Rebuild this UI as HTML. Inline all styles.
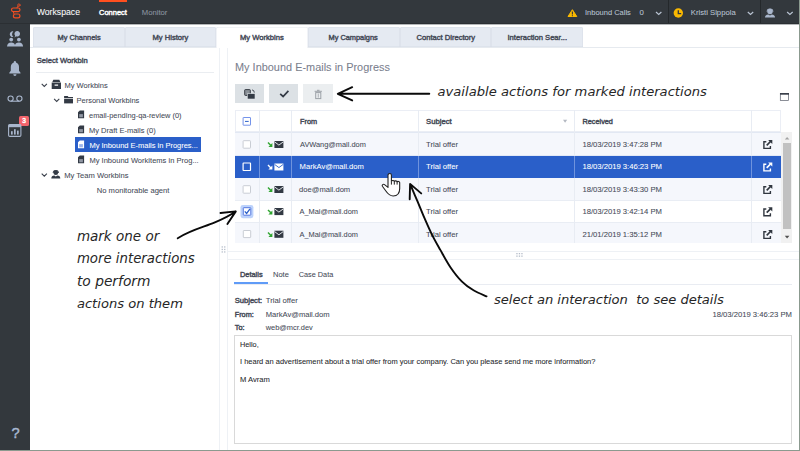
<!DOCTYPE html>
<html><head><meta charset="utf-8">
<style>
html,body{margin:0;padding:0;}
body{width:800px;height:451px;overflow:hidden;background:#fff;position:relative;font-family:"Liberation Sans",sans-serif;font-size:7.4px;color:#454a57;}
.a{position:absolute;white-space:nowrap;line-height:1;}
.b{-webkit-text-stroke:.42px currentColor;}
.r{-webkit-text-stroke:.06px currentColor;}
.hand{font-family:"DejaVu Sans",sans-serif;font-style:italic;color:#262626;}
.tab{top:27px;height:19.5px;width:91.67px;background:#e5eaf2;border-radius:2px 2px 0 0;box-shadow:inset 0 0 0 .5px #d6dce6;}
.row{left:234.8px;width:546.2px;}
.vl{width:1px;background:#e8ecf3;}
svg{position:absolute;left:0;top:0;overflow:visible}
</style></head><body>
<!-- chrome -->
<div class="a" style="left:0;top:0;width:800px;height:24px;background:#33383d"></div>
<div class="a" style="left:0;top:22.6px;width:800px;height:1.4px;background:#2b2f33"></div>
<div class="a" style="left:30px;top:24px;width:770px;height:1px;background:#b4b7b9"></div>
<div class="a" style="left:0;top:24px;width:30px;height:427px;background:#33383d"></div>
<div class="a" style="left:99px;top:0;width:27.8px;height:1.8px;background:#ff4f1f"></div>
<div class="a" style="left:668px;top:0;width:1px;height:23px;background:#24282b"></div>
<div class="a" style="left:760px;top:0;width:1px;height:23px;background:#24282b"></div>

<!-- tabs -->
<div class="a" style="left:30px;top:46.5px;width:770px;height:1px;background:#e6eaef"></div>
<div class="a tab" style="left:33px"></div>
<div class="a tab" style="left:124.67px"></div>
<div class="a tab" style="left:216.33px;background:#fff;height:20.5px;box-shadow:inset .5px .5px 0 0 #e3e7ee, inset -.5px 0 0 0 #e3e7ee"></div>
<div class="a tab" style="left:308px"></div>
<div class="a tab" style="left:399.67px"></div>
<div class="a tab" style="left:491.33px"></div>

<!-- left panel -->
<div class="a" style="left:36px;top:72px;width:178px;height:1px;background:#eaedf1"></div>
<div class="a" style="left:219.3px;top:47.5px;width:1px;height:403px;background:#eef1f5"></div>
<div class="a" style="left:227.3px;top:47.5px;width:1px;height:403px;background:#eef1f5"></div>
<div class="a" style="left:75.4px;top:137.4px;width:126.1px;height:14.5px;background:#2a5fc9"></div>

<!-- action buttons -->
<div class="a" style="left:234.8px;top:83.8px;width:29.3px;height:19.4px;background:#dce1e5"></div>
<div class="a" style="left:268.9px;top:83.8px;width:29.5px;height:19.4px;background:#dce1e5"></div>
<div class="a" style="left:303.2px;top:83.8px;width:29.7px;height:19.4px;background:#ebeef0"></div>

<!-- table -->
<div class="a row" style="top:110px;height:22.3px;background:#fff;box-shadow:inset 0 0 0 1px #ebeef5"></div>
<div class="a row" style="top:132px;height:1px;background:#e2e8f3"></div>
<div class="a row" style="top:133px;height:23px;background:#f5f7fc"></div>
<div class="a row" style="top:156px;height:22px;background:#2a5fc9"></div>
<div class="a row" style="top:155px;height:1px;background:#e3e9f6"></div>
<div class="a row" style="top:178px;height:22px;background:#f5f7fc"></div>
<div class="a row" style="top:200px;height:22.4px;background:#fff"></div>
<div class="a row" style="top:222.4px;height:20.2px;background:#f5f7fc"></div>
<div class="a row" style="top:199.6px;height:.8px;background:#e9edf4"></div>
<div class="a row" style="top:222px;height:.8px;background:#e9edf4"></div>
<!-- column lines -->
<div class="a vl" style="left:258.6px;top:110px;height:132.6px"></div>
<div class="a vl" style="left:291.2px;top:110px;height:132.6px"></div>
<div class="a vl" style="left:418px;top:110px;height:132.6px"></div>
<div class="a vl" style="left:573.6px;top:110px;height:132.6px"></div>
<div class="a vl" style="left:750.8px;top:110px;height:132.6px"></div>
<div class="a" style="left:258.6px;top:156px;width:1px;height:22px;background:#6f93dd"></div>
<div class="a" style="left:291.2px;top:156px;width:1px;height:22px;background:#6f93dd"></div>
<div class="a" style="left:418px;top:156px;width:1px;height:22px;background:#6f93dd"></div>
<div class="a" style="left:573.6px;top:156px;width:1px;height:22px;background:#6f93dd"></div>
<div class="a" style="left:750.8px;top:156px;width:1px;height:22px;background:#6f93dd"></div>
<!-- scrollbar -->
<div class="a" style="left:781px;top:132.4px;width:11.3px;height:110.2px;background:#f1f1f1"></div>
<div class="a" style="left:783px;top:143px;width:8px;height:86px;background:#c1c1c1"></div>

<!-- splitter + details -->
<div class="a" style="left:227.3px;top:250.8px;width:572px;height:1px;background:#eef1f5"></div>
<div class="a" style="left:227.3px;top:259.4px;width:572px;height:1px;background:#eef1f5"></div>
<div class="a" style="left:234px;top:284px;width:558px;height:1px;background:#e9ecf2"></div>
<div class="a" style="left:234px;top:282px;width:34px;height:2px;background:#5f9bf7"></div>
<div class="a" style="left:234px;top:335px;width:558px;height:109px;box-sizing:border-box;border:1px solid #d9d9d9;background:#fff"></div>

<div class="a" style="left:19.4px;top:116px;width:9.3px;height:9.8px;border-radius:1.6px;background:#f2646c"></div>
<div class="a r" style="left:36.75px;top:7.97px;font-size:8.7px;color:#fbfbfc;">Workspace</div>
<div class="a b" style="left:99.00px;top:8.97px;font-size:7.5px;color:#ffffff;">Connect</div>
<div class="a r" style="left:141.75px;top:8.97px;font-size:7.7px;color:#8c96a1;">Monitor</div>
<div class="a r" style="left:585.00px;top:8.97px;font-size:7.5px;color:#b9c3d2;">Inbound Calls</div>
<div class="a r" style="left:639.40px;top:8.97px;font-size:7.8px;color:#b9c3d2;">0</div>
<div class="a r" style="left:690.80px;top:8.97px;font-size:7.7px;color:#b9c3d2;">Kristi Sippola</div>
<div class="a b" style="left:57.50px;top:33.98px;font-size:7.4px;color:#454a57;">My Channels</div>
<div class="a b" style="left:152.50px;top:33.98px;font-size:7.6px;color:#454a57;">My History</div>
<div class="a b" style="left:240.00px;top:33.98px;font-size:7.6px;color:#454a57;">My Workbins</div>
<div class="a b" style="left:328.50px;top:33.98px;font-size:7.4px;color:#454a57;">My Campaigns</div>
<div class="a b" style="left:416.50px;top:33.98px;font-size:7.6px;color:#454a57;">Contact Directory</div>
<div class="a b" style="left:507.50px;top:33.98px;font-size:7.6px;color:#454a57;">Interaction Sear...</div>
<div class="a b" style="left:36.75px;top:56.98px;font-size:7.6px;color:#454a57;">Select Workbin</div>
<div class="a r" style="left:64.50px;top:81.97px;font-size:7.5px;color:#454a57;">My Workbins</div>
<div class="a r" style="left:76.50px;top:96.97px;font-size:7.5px;color:#454a57;">Personal Workbins</div>
<div class="a r" style="left:89.00px;top:111.97px;font-size:7.4px;color:#454a57;letter-spacing:0.019px;">email-pending-qa-review (0)</div>
<div class="a r" style="left:89.00px;top:126.97px;font-size:7.5px;color:#454a57;">My Draft E-mails (0)</div>
<div class="a r" style="left:89.40px;top:141.97px;font-size:7.5px;color:#ffffff;letter-spacing:-0.012px;">My Inbound E-mails in Progres...</div>
<div class="a r" style="left:89.40px;top:156.97px;font-size:7.5px;color:#454a57;letter-spacing:0.022px;">My Inbound Workitems in Prog...</div>
<div class="a r" style="left:64.20px;top:171.97px;font-size:7.6px;color:#454a57;">My Team Workbins</div>
<div class="a r" style="left:96.80px;top:186.97px;font-size:7.6px;color:#454a57;">No monitorable agent</div>
<div class="a r" style="left:235.00px;top:61.98px;font-size:10.9px;color:#7a7e8d;letter-spacing:0.019px;">My Inbound E-mails in Progress</div>
<div class="a b" style="left:300.00px;top:117.97px;font-size:7.3px;color:#454a57;">From</div>
<div class="a b" style="left:426.00px;top:117.97px;font-size:7.7px;color:#454a57;">Subject</div>
<div class="a b" style="left:582.50px;top:117.97px;font-size:7.3px;color:#454a57;">Received</div>
<div class="a r" style="left:300.00px;top:140.97px;font-size:7.4px;color:#454a57;">AVWang@mail.dom</div>
<div class="a r" style="left:426.00px;top:140.97px;font-size:7.7px;color:#454a57;">Trial offer</div>
<div class="a r" style="left:582.50px;top:140.97px;font-size:7.7px;color:#454a57;letter-spacing:-0.023px;">18/03/2019 3:47:28 PM</div>
<div class="a r" style="left:299.60px;top:162.97px;font-size:7.6px;color:#ffffff;">MarkAv@mail.dom</div>
<div class="a r" style="left:426.00px;top:162.97px;font-size:7.7px;color:#ffffff;">Trial offer</div>
<div class="a r" style="left:582.50px;top:162.97px;font-size:7.7px;color:#ffffff;letter-spacing:-0.023px;">18/03/2019 3:46:23 PM</div>
<div class="a r" style="left:299.00px;top:185.97px;font-size:7.6px;color:#454a57;">doe@mail.dom</div>
<div class="a r" style="left:426.00px;top:185.97px;font-size:7.7px;color:#454a57;">Trial offer</div>
<div class="a r" style="left:582.50px;top:185.97px;font-size:7.7px;color:#454a57;letter-spacing:-0.023px;">18/03/2019 3:43:30 PM</div>
<div class="a r" style="left:299.50px;top:207.97px;font-size:7.4px;color:#454a57;">A_Mai@mail.dom</div>
<div class="a r" style="left:426.00px;top:207.97px;font-size:7.7px;color:#454a57;">Trial offer</div>
<div class="a r" style="left:582.50px;top:207.97px;font-size:7.7px;color:#454a57;letter-spacing:-0.023px;">18/03/2019 3:42:14 PM</div>
<div class="a r" style="left:299.50px;top:230.97px;font-size:7.4px;color:#454a57;">A_Mai@mail.dom</div>
<div class="a r" style="left:426.00px;top:230.97px;font-size:7.7px;color:#454a57;">Trial offer</div>
<div class="a r" style="left:582.50px;top:230.97px;font-size:7.7px;color:#454a57;letter-spacing:-0.023px;">21/01/2019 1:35:12 PM</div>
<div class="a b" style="left:240.00px;top:270.98px;font-size:7.4px;color:#454a57;">Details</div>
<div class="a r" style="left:273.00px;top:270.98px;font-size:7.5px;color:#454a57;">Note</div>
<div class="a r" style="left:298.75px;top:270.98px;font-size:7.3px;color:#454a57;">Case Data</div>
<div class="a b" style="left:234.70px;top:296.98px;font-size:7.6px;color:#454a57;">Subject:</div>
<div class="a b" style="left:234.70px;top:310.98px;font-size:7.3px;color:#454a57;">From:</div>
<div class="a b" style="left:234.70px;top:323.98px;font-size:7.4px;color:#454a57;">To:</div>
<div class="a r" style="left:265.75px;top:296.98px;font-size:7.7px;color:#454a57;">Trial offer</div>
<div class="a r" style="left:265.75px;top:310.98px;font-size:7.6px;color:#454a57;letter-spacing:-0.024px;">MarkAv@mail.dom</div>
<div class="a r" style="left:265.75px;top:323.98px;font-size:7.4px;color:#454a57;">web@mcr.dev</div>
<div class="a r" style="left:712.50px;top:310.98px;font-size:7.7px;color:#454a57;letter-spacing:-0.023px;">18/03/2019 3:46:23 PM</div>
<div class="a r" style="left:240.00px;top:340.98px;font-size:7.3px;color:#26282c;">Hello,</div>
<div class="a r" style="left:240.00px;top:357.98px;font-size:7.5px;color:#26282c;letter-spacing:-0.011px;">I heard an advertisement about a trial offer from your company. Can you please send me more information?</div>
<div class="a r" style="left:240.00px;top:375.98px;font-size:7.6px;color:#26282c;">M Avram</div>
<div class="a b" style="left:22.30px;top:117.97px;font-size:6.6px;color:#ffffff;">3</div>
<div class="a b" style="left:11.40px;top:425.98px;font-size:14.7px;color:#a9b9d3;letter-spacing:-0.580px;">?</div>
<div class="a hand" style="left:437.50px;top:84.97px;font-size:13.1px;letter-spacing:0.018px;">available actions for marked interactions</div>
<div class="a hand" style="left:76.90px;top:229.97px;font-size:13.5px;">mark one or</div>
<div class="a hand" style="left:76.90px;top:251.97px;font-size:13.3px;">more interactions</div>
<div class="a hand" style="left:76.90px;top:274.98px;font-size:13.8px;">to perform</div>
<div class="a hand" style="left:76.90px;top:296.98px;font-size:13.1px;">actions on them</div>
<div class="a hand" style="left:494.00px;top:292.98px;font-size:13.1px;letter-spacing:-0.023px;">select an interaction&nbsp; to see details</div>

<svg width="800" height="451" viewBox="0 0 800 451">
<!-- genesys logo -->
<g fill="none" stroke="#f04e23" stroke-width="1.2" stroke-linecap="round">
<rect x="11.500" y="8" width="8.500" height="3.600" rx="1.800"/>
<rect x="13.400" y="14" width="6.500" height="3.800" rx="1.900"/>
<circle cx="18.900" cy="5.100" r="1.200" stroke-width=".85"/>
<path d="M18 6.200 L17 7.800" stroke-width="1"/>
<path d="M13.600 11.700 Q12.600 13 14.300 14.200" stroke-width="1"/>
</g>
<!-- sidebar icons -->
<g fill="#a9b6cc">
<circle cx="11.2" cy="39.6" r="1.9"/><circle cx="18.9" cy="39.6" r="1.9"/>
<path d="M7 46.5 Q7.4 42.4 11.2 42.4 Q14.6 42.4 15 45.2 Q15.4 42.4 18.9 42.4 Q22.7 42.4 23.1 46.5 Z"/>
<path d="M13.4 31.4 A2.9 2.9 0 1 0 13.4 37 A3.6 3.6 0 0 1 13.4 31.4 Z"/>
<path d="M17 31 A2.8 2.8 0 1 1 16 36.3 L14.6 37.6 L15.1 35.6 A2.8 2.8 0 0 1 17 31 Z"/>
<!-- bell -->
<path d="M14.9 61 a1.1 1.1 0 0 1 1.1 1.1 v.5 c2 .6 3 2.300 3 4.500 v3.600 l1.500 2 v.800 h-11.200 v-.800 l1.500 -2 v-3.600 c0 -2.200 1 -3.900 3 -4.500 v-.5 a1.100 1.100 0 0 1 1.100 -1.100 z"/>
<path d="M13.300 74.300 h3.200 a1.600 1.600 0 0 1 -3.200 0 z"/>
</g>
<g fill="none" stroke="#a9b6cc" stroke-width="1.1">
<circle cx="10.6" cy="98.6" r="2.6"/><circle cx="19.4" cy="98.6" r="2.6"/><path d="M10.6 101.2 H19.4"/>
<rect x="8.6" y="124.6" width="12.3" height="11.8" rx="1.2"/>
</g>
<g fill="#a9b6cc">
<rect x="8.6" y="124.6" width="12.3" height="2.6"/>
<rect x="11" y="131.2" width="1.7" height="3.4"/><rect x="14" y="129.200" width="1.7" height="5.400"/><rect x="17" y="130.600" width="1.7" height="4"/>
</g>

<!-- top-right icons -->
<path d="M572.4 9.7 L576.8 16.500 H568 Z" fill="#fbb900" stroke="#fbb900" stroke-width="1" stroke-linejoin="round"/>
<path d="M572.4 11.6 V14.400 M572.4 15.300 V16.200" stroke="#33383d" stroke-width="1.100" fill="none"/>
<g fill="none" stroke="#b9c3d2" stroke-width="1.2">
<path d="M656 12 L658.7 14.500 L661.4 12"/>
<path d="M747.8 12 L750.5 14.500 L753.2 12"/>
<path d="M787.100 12 L789.900 14.500 L792.700 12"/>
</g>
<circle cx="678.3" cy="13" r="4.700" fill="#fbb900"/>
<path d="M678.300 10.300 V13.600 H681.200" stroke="#33383d" stroke-width="1.3" fill="none"/>
<g fill="#a9b6cc">
<circle cx="770" cy="11.500" r="2.700"/>
<path d="M765 17.500 Q765 14.600 768.300 14.400 L770 15.600 L771.700 14.400 Q775 14.600 775 17.500 Z"/>
<path d="M766.600 11.800 A3.400 3.400 0 0 1 773.400 11.800 L772.600 11.800 A2.600 2.600 0 0 0 767.400 11.800 Z" />
</g>

<!-- tree chevrons + icons -->
<g fill="none" stroke="#3b414c" stroke-width="1.1">
<path d="M41.700 83.900 L44.300 86.400 L46.900 83.900"/>
<path d="M54.100 98.900 L56.700 101.400 L59.300 98.900"/>
<path d="M41.700 173.700 L44.300 176.200 L46.900 173.700"/>
</g>
<g fill="#333a45">
<path d="M53.300 79.700 h6 l1 2.400 h-8 z"/>
<path d="M51.700 82.500 h9.300 v6.500 h-9.300 z M54.600 84.600 v1.100 h3.500 v-1.100 z" fill-rule="evenodd"/>
<path d="M64.100 96 h3.600 l.8 1.100 h4.500 v1 h-8.900 z"/>
<path d="M64.100 98.700 h8.900 v4.700 h-8.900 z"/>
<!-- docs -->
<path d="M79.800 110.4 h4.300 v7.900 h-6.100 v-6.100 z"/><rect x="79.200" y="114.1" width="3.700" height="3.200" fill="#9096a2"/>
<path d="M79.800 125.4 h4.300 v7.900 h-6.100 v-6.100 z"/><rect x="79.200" y="129.1" width="3.700" height="3.200" fill="#9096a2"/>
<path d="M79.800 155.4 h4.300 v7.900 h-6.100 v-6.100 z"/><rect x="79.200" y="159.1" width="3.700" height="3.200" fill="#9096a2"/>
<!-- team -->
<circle cx="55.800" cy="172.700" r="2.400"/>
<path d="M51.300 178.400 Q51.300 175.600 54.300 175.400 L55.800 176.500 L57.300 175.400 Q60.300 175.600 60.300 178.400 Z"/>
<path d="M52.700 173 A3.100 3.100 0 0 1 58.900 173 L58.100 173 A2.300 2.300 0 0 0 53.500 173 Z"/>
</g>
<path d="M79.800 140.4 h4.300 v7.900 h-6.100 v-6.100 z" fill="#ffffff"/><rect x="79.200" y="144.1" width="3.700" height="3.200" fill="#9db5ea"/>

<!-- button icons -->
<g>
<rect x="244.700" y="89.600" width="5.600" height="5.800" rx=".6" fill="#8b9198" stroke="#3a3f47" stroke-width="1"/>
<rect x="247.300" y="93.700" width="7.700" height="5.300" fill="#333a45" stroke="#dce1e5" stroke-width=".6"/>
<path d="M252 89.900 Q254.300 90 254.300 92.600" fill="none" stroke="#4a505a" stroke-width="1"/>
<path d="M280.200 93.900 L283.100 96.500 L288.400 90.800" fill="none" stroke="#333a45" stroke-width="1.7"/>
<g fill="none" stroke="#9ca1a7" stroke-width="1">
<path d="M314.600 91.300 H321.900 M317 90.300 H319.500"/>
<rect x="315.700" y="92.600" width="5.100" height="6" />
<path d="M318.250 93.600 V97.600" stroke-width=".8"/>
</g>
</g>

<!-- maximize -->
<rect x="780.300" y="93.500" width="8.300" height="7" fill="#fff" stroke="#5a5f6c" stroke-width=".7"/>
<rect x="780" y="93" width="9" height="1.700" fill="#3a3f4a"/>

<!-- header checkbox -->
<rect x="243.100" y="117.500" width="7.400" height="7.700" rx=".3" fill="#fff" stroke="#7493ea" stroke-width="1"/>
<path d="M245 121.400 H248.700" stroke="#2a5fc9" stroke-width="1"/>
<path d="M563 119.800 h4.200 l-2.100 3 z" fill="#b4b9c2"/>

<!-- row checkboxes -->
<g fill="#fff" stroke="#c9cdd4" stroke-width="1">
<rect x="243.100" y="140.700" width="7.400" height="7.500" rx=".6"/>
<rect x="243.100" y="185.700" width="7.400" height="7.500" rx=".6"/>
<rect x="243.300" y="230.500" width="7.400" height="7.100" rx=".6"/>
</g>
<rect x="243.100" y="163" width="7.400" height="7.500" rx=".4" fill="#2a5fc9" stroke="#ffffff" stroke-width="1.200"/>
<rect x="240.500" y="204.900" width="12.900" height="13.300" rx="2.400" fill="#bcd2fb"/>
<rect x="243.300" y="207.700" width="7.500" height="7.500" rx=".5" fill="#fff" stroke="#5578e0" stroke-width="1"/>
<path d="M244.800 211.400 L246.600 213.400 L250 208.900" fill="none" stroke="#2a5fc9" stroke-width="1.300"/>

<!-- row icons: arrow + envelope -->
<g id="ri1">
<path d="M268 142.5 L270.900 145.4" fill="none" stroke="#2fa52f" stroke-width="1.400"/><path d="M272.400 143.0 V147.1 H268.400 Z" fill="#2fa52f"/>
<path d="M274.400 141 h9 v7 h-9 z" fill="#323943"/>
<path d="M274.600 141.900 L278.900 145.100 L283.200 141.900" fill="none" stroke="#f5f7fc" stroke-width=".9"/>
</g>
<g>
<path d="M268 165.0 L270.900 167.9" fill="none" stroke="#ffffff" stroke-width="1.400"/><path d="M272.400 165.5 V169.6 H268.400 Z" fill="#ffffff"/>
<path d="M274.400 163.500 h9 v7 h-9 z" fill="#ffffff"/>
<path d="M274.600 164.400 L278.900 167.600 L283.200 164.400" fill="none" stroke="#2a5fc9" stroke-width=".9"/>
</g>
<g>
<path d="M268 187.5 L270.900 190.4" fill="none" stroke="#2fa52f" stroke-width="1.400"/><path d="M272.400 188.0 V192.1 H268.400 Z" fill="#2fa52f"/>
<path d="M274.400 186 h9 v7 h-9 z" fill="#323943"/>
<path d="M274.600 186.900 L278.900 190.100 L283.200 186.900" fill="none" stroke="#f5f7fc" stroke-width=".9"/>
</g>
<g>
<path d="M268 209.9 L270.900 212.8" fill="none" stroke="#2fa52f" stroke-width="1.400"/><path d="M272.400 210.4 V214.5 H268.400 Z" fill="#2fa52f"/>
<path d="M274.400 208 h9 v7.100 h-9 z" fill="#323943"/>
<path d="M274.600 208.900 L278.900 212.100 L283.200 208.900" fill="none" stroke="#ffffff" stroke-width=".9"/>
</g>
<g>
<path d="M268 232.5 L270.900 235.4" fill="none" stroke="#2fa52f" stroke-width="1.400"/><path d="M272.400 233.0 V237.1 H268.400 Z" fill="#2fa52f"/>
<path d="M274.400 230.700 h9 v7.100 h-9 z" fill="#323943"/>
<path d="M274.600 231.600 L278.900 234.800 L283.200 231.600" fill="none" stroke="#f5f7fc" stroke-width=".9"/>
</g>

<!-- popout icons -->
<path d="M766.300 141.7 H763.900 V148.4 H770.400 V146.0" fill="none" stroke="#30363f" stroke-width="1.400"/><path d="M766.700 145.3 L770.500 141.5" fill="none" stroke="#30363f" stroke-width="1.700"/><path d="M768.100 139.9 H772.300 V144.1 Z" fill="#30363f"/>
<path d="M766.300 164.2 H763.900 V170.9 H770.400 V168.5" fill="none" stroke="#ffffff" stroke-width="1.400"/><path d="M766.700 167.8 L770.500 164.0" fill="none" stroke="#ffffff" stroke-width="1.700"/><path d="M768.100 162.4 H772.300 V166.6 Z" fill="#ffffff"/>
<path d="M766.300 186.7 H763.900 V193.4 H770.400 V191.0" fill="none" stroke="#30363f" stroke-width="1.400"/><path d="M766.700 190.3 L770.500 186.5" fill="none" stroke="#30363f" stroke-width="1.700"/><path d="M768.100 184.9 H772.300 V189.1 Z" fill="#30363f"/>
<path d="M766.300 209.0 H763.900 V215.7 H770.400 V213.3" fill="none" stroke="#30363f" stroke-width="1.400"/><path d="M766.700 212.6 L770.500 208.8" fill="none" stroke="#30363f" stroke-width="1.700"/><path d="M768.100 207.2 H772.300 V211.4 Z" fill="#30363f"/>
<path d="M766.300 231.7 H763.900 V238.4 H770.400 V236.0" fill="none" stroke="#30363f" stroke-width="1.400"/><path d="M766.700 235.3 L770.500 231.5" fill="none" stroke="#30363f" stroke-width="1.700"/><path d="M768.100 229.9 H772.300 V234.1 Z" fill="#30363f"/>

<!-- scrollbar arrows -->
<path d="M784.800 139.500 L787.100 136.900 L789.400 139.500 Z" fill="#a3a3a3"/>
<path d="M784.800 235.800 L787.100 238.400 L789.400 235.800 Z" fill="#505050"/>

<!-- splitter grips -->
<g fill="#b5bdc9">
<rect x="516.300" y="253" width="1.300" height="1.300"/><rect x="518.800" y="253" width="1.300" height="1.300"/><rect x="521.300" y="253" width="1.300" height="1.300"/>
<rect x="516.300" y="255.500" width="1.300" height="1.300"/><rect x="518.800" y="255.500" width="1.300" height="1.300"/><rect x="521.300" y="255.500" width="1.300" height="1.300"/>
<rect x="221.600" y="246.300" width="1.300" height="1.300"/><rect x="224.100" y="246.300" width="1.300" height="1.300"/>
<rect x="221.600" y="248.800" width="1.300" height="1.300"/><rect x="224.100" y="248.800" width="1.300" height="1.300"/>
<rect x="221.600" y="251.300" width="1.300" height="1.300"/><rect x="224.100" y="251.300" width="1.300" height="1.300"/>
</g>

<!-- annotation arrows -->
<g fill="none" stroke="#0a0a0a" stroke-width="1.9" stroke-linecap="round" stroke-linejoin="round">
<path d="M429.300 93.800 H338 M352.200 87.200 L337.800 93.800 L352.200 100.400"/>
<path d="M177.700 238.200 C191 230 204 227 214.300 222.700 C224 218.500 230 215.500 235.600 211.500 M220.500 213 L235.800 211.400 L227.400 224"/>
<path d="M486.5 296.3 C484.3 295.3 477.6 292.8 473.5 290.3 C469.4 287.9 465.9 285.5 462.0 281.6 C458.1 277.8 454.0 272.5 450.4 267.2 C446.8 261.9 443.4 255.4 440.3 249.9 C437.2 244.4 434.3 239.4 431.7 234.1 C429.1 228.8 426.9 223.7 424.5 218.2 C422.1 212.700 419.7 206.5 417.3 200.9 C414.9 195.3 411.5 187.2 410.3 184.4 M409.700 199.200 L410.100 183.900 L421.200 193.400"/>
</g>
<!-- hand cursor -->
<path d="M388 175.200 a1.700 1.700 0 0 1 3.400 0 v6 c.4 -1 2.600 -.9 2.900 .200 c.500 -.900 2.500 -.700 2.800 .400 c.600 -.700 2.400 -.400 2.600 .800 v6 c0 4.500 -2.400 7.400 -6.500 7.400 c-3.600 0 -5.300 -1.900 -7.500 -5.200 l-3.300 -4.600 c-.800 -1.300 .900 -2.500 2.100 -1.600 l3.500 2.800 z" fill="#fff" stroke="#222" stroke-width="1.100" stroke-linejoin="round"/>
<path d="M391.400 181.400 v3.200 M394.300 181.600 v3 M397.100 182 v2.600" stroke="#222" stroke-width="1" fill="none"/>

<!-- frame -->
<rect x="799" y="0" width="1" height="451" fill="#8b9a8f"/>
<rect x="0" y="450" width="800" height="1" fill="#8b9a8f"/>
</svg>
</body></html>
